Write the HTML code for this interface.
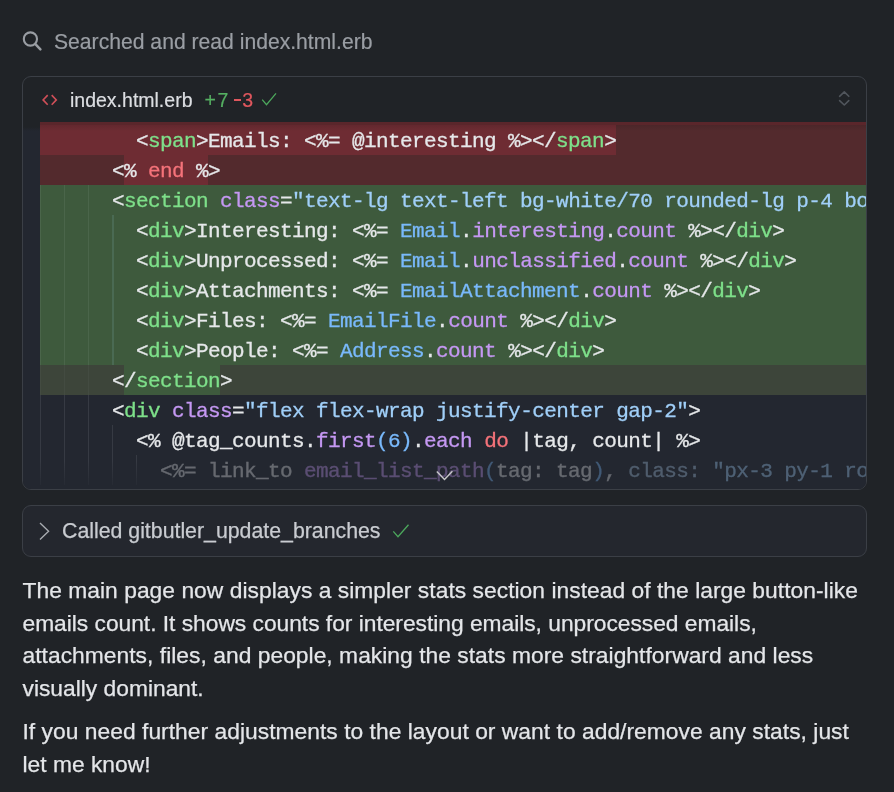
<!DOCTYPE html>
<html><head><meta charset="utf-8">
<style>
html,body{margin:0;padding:0;}
body{-webkit-font-smoothing:antialiased;will-change:transform;width:894px;height:792px;background:#202327;position:relative;overflow:hidden;font-family:"Liberation Sans",sans-serif;}
.abs{position:absolute;}
.search{left:54px;top:30.3px;font-size:21.15px;-webkit-text-stroke:0.2px currentColor;color:#9a9ea4;white-space:nowrap;line-height:24px;}
.card{left:22px;top:76px;width:843px;height:412px;border:1px solid #3b3f46;border-radius:9px;overflow:hidden;background:#202327;}
.hdr-name{left:47px;top:11px;font-size:19.5px;-webkit-text-stroke:0.2px currentColor;color:#dcdee2;white-space:nowrap;line-height:24px;}
.code{left:0;top:45px;width:843px;height:367px;background:#232730;overflow:hidden;}
.row{position:absolute;left:17px;width:826px;height:30px;}
.txt{position:absolute;left:0;top:1.8px;-webkit-text-stroke:0.3px currentColor;font-family:"Liberation Mono",monospace;font-size:21px;letter-spacing:-0.6px;line-height:30px;white-space:pre;color:#e6e8ea;}
.g{color:#7ee08a}.k{color:#f5737a}.p{color:#c598f3}.s{color:#a0cff8}.c{color:#79b9fb}
.guide{position:absolute;top:0;width:1px;height:30px;background:#363a43;}
.called{left:22px;top:505px;width:843px;height:50px;border:1px solid #3b3f46;border-radius:9px;background:#24272e;}
.called-t{left:39px;top:13px;-webkit-text-stroke:0.25px currentColor;font-size:21.3px;color:#c9ccd1;white-space:nowrap;line-height:24px;}
.body{left:22.5px;-webkit-text-stroke:0.25px currentColor;font-size:22.8px;color:#e4e6e9;white-space:nowrap;line-height:24px;}
</style></head><body>

<!-- search row -->
<svg class="abs" style="left:18px;top:26px" width="30" height="30" viewBox="0 0 30 30">
  <circle cx="12.4" cy="13.0" r="6.6" fill="none" stroke="#999da3" stroke-width="2.1"/>
  <line x1="17.4" y1="18.1" x2="22.4" y2="23.3" stroke="#999da3" stroke-width="2.5" stroke-linecap="round"/>
</svg>
<div class="abs search">Searched and read index.html.erb</div>

<div class="abs card">
  <svg class="abs" style="left:18px;top:16px" width="18" height="16" viewBox="0 0 18 16">
    <polyline points="6.7,2.1 2.1,6.9 6.7,11.7" fill="none" stroke="#cf4f58" stroke-width="1.6"/>
    <polyline points="10.7,2.1 15.3,6.9 10.7,11.7" fill="none" stroke="#cf4f58" stroke-width="1.6"/>
  </svg>
  <div class="abs hdr-name">index.html.erb</div>
  <div class="abs hdr-name" style="left:181.5px;color:#55b062;letter-spacing:1.6px">+7</div>
  <div class="abs" style="left:210.8px;top:22.3px;width:7.6px;height:1.9px;background:#e0575e"></div>
  <div class="abs hdr-name" style="left:219.2px;color:#e0575e">3</div>
  <svg class="abs" style="left:238px;top:15px" width="18" height="16" viewBox="0 0 18 16">
    <polyline points="1.2,7.6 5.5,12.7 15,1.4" fill="none" stroke="#4ca75c" stroke-width="1.3"/>
  </svg>
  <svg class="abs" style="left:813px;top:13px" width="16" height="20" viewBox="0 0 16 20">
    <polyline points="3.6,6.3 8.3,1.9 12.8,6.3" fill="none" stroke="#50555c" stroke-width="1.6" stroke-linecap="round" stroke-linejoin="round"/>
    <polyline points="3.6,10.6 8.3,15.0 12.8,10.6" fill="none" stroke="#50555c" stroke-width="1.6" stroke-linecap="round" stroke-linejoin="round"/>
  </svg>

  <div class="abs code">
    <!-- partial row -->
    <div class="row" style="top:0;height:3px;background:#5a262b"></div>
    <!-- row1 -->
    <div class="row" style="top:3px;background:#532a2d">
      <div class="abs" style="left:0;top:0;width:576px;height:30px;background:#6e2c33"></div>
      <div class="txt">        &lt;<span class="g">span</span>&gt;Emails: &lt;%= @interesting %&gt;&lt;/<span class="g">span</span>&gt;</div>
    </div>
    <!-- row2 -->
    <div class="row" style="top:33px;background:#532a2d">
      <div class="abs" style="left:84px;top:0;width:84px;height:30px;background:#6e2c33"></div>
      <div class="txt">      &lt;% <span class="k">end</span> %&gt;</div>
    </div>
    <!-- rows 3-8 -->
    <div class="row" style="top:63px;background:#3e5a3d">
      <div class="guide" style="left:0px;background:#4a654a"></div><div class="guide" style="left:24px;background:#4a654a"></div><div class="guide" style="left:48px;background:#4a654a"></div>
      <div class="txt">      &lt;<span class="g">section</span> <span class="p">class</span>=<span class="s">"text-lg text-left bg-white/70 rounded-lg p-4 border border-gray-200"</span>&gt;</div>
    </div>
    <div class="row" style="top:93px;background:#3e5a3d">
      <div class="guide" style="left:0px;background:#4a654a"></div><div class="guide" style="left:24px;background:#4a654a"></div><div class="guide" style="left:48px;background:#4a654a"></div><div class="guide" style="left:72px;width:2px;background:#4a6a53"></div>
      <div class="txt">        &lt;<span class="g">div</span>&gt;Interesting: &lt;%= <span class="c">Email</span>.<span class="p">interesting</span>.<span class="p">count</span> %&gt;&lt;/<span class="g">div</span>&gt;</div>
    </div>
    <div class="row" style="top:123px;background:#3e5a3d">
      <div class="guide" style="left:0px;background:#4a654a"></div><div class="guide" style="left:24px;background:#4a654a"></div><div class="guide" style="left:48px;background:#4a654a"></div><div class="guide" style="left:72px;width:2px;background:#4a6a53"></div>
      <div class="txt">        &lt;<span class="g">div</span>&gt;Unprocessed: &lt;%= <span class="c">Email</span>.<span class="p">unclassified</span>.<span class="p">count</span> %&gt;&lt;/<span class="g">div</span>&gt;</div>
    </div>
    <div class="row" style="top:153px;background:#3e5a3d">
      <div class="guide" style="left:0px;background:#4a654a"></div><div class="guide" style="left:24px;background:#4a654a"></div><div class="guide" style="left:48px;background:#4a654a"></div><div class="guide" style="left:72px;width:2px;background:#4a6a53"></div>
      <div class="txt">        &lt;<span class="g">div</span>&gt;Attachments: &lt;%= <span class="c">EmailAttachment</span>.<span class="p">count</span> %&gt;&lt;/<span class="g">div</span>&gt;</div>
    </div>
    <div class="row" style="top:183px;background:#3e5a3d">
      <div class="guide" style="left:0px;background:#4a654a"></div><div class="guide" style="left:24px;background:#4a654a"></div><div class="guide" style="left:48px;background:#4a654a"></div><div class="guide" style="left:72px;width:2px;background:#4a6a53"></div>
      <div class="txt">        &lt;<span class="g">div</span>&gt;Files: &lt;%= <span class="c">EmailFile</span>.<span class="p">count</span> %&gt;&lt;/<span class="g">div</span>&gt;</div>
    </div>
    <div class="row" style="top:213px;background:#3e5a3d">
      <div class="guide" style="left:0px;background:#4a654a"></div><div class="guide" style="left:24px;background:#4a654a"></div><div class="guide" style="left:48px;background:#4a654a"></div><div class="guide" style="left:72px;width:2px;background:#4a6a53"></div>
      <div class="txt">        &lt;<span class="g">div</span>&gt;People: &lt;%= <span class="c">Address</span>.<span class="p">count</span> %&gt;&lt;/<span class="g">div</span>&gt;</div>
    </div>
    <!-- row9 -->
    <div class="row" style="top:243px;background:#3d453a">
      <div class="abs" style="left:84px;top:0;width:96px;height:30px;background:#3e5a3d"></div>
      <div class="guide" style="left:0px;background:#434b41"></div><div class="guide" style="left:24px;background:#434b41"></div><div class="guide" style="left:48px;background:#434b41"></div>
      <div class="txt">      &lt;/<span class="g">section</span>&gt;</div>
    </div>
    <!-- row10 -->
    <div class="row" style="top:273px;">
      <div class="guide" style="left:0px"></div><div class="guide" style="left:24px"></div><div class="guide" style="left:48px"></div>
      <div class="txt">      &lt;<span class="g">div</span> <span class="p">class</span>=<span class="s">"flex flex-wrap justify-center gap-2"</span>&gt;</div>
    </div>
    <div class="row" style="top:303px;">
      <div class="guide" style="left:0px"></div><div class="guide" style="left:24px"></div><div class="guide" style="left:48px"></div><div class="guide" style="left:72px"></div>
      <div class="txt">        &lt;% @tag_counts.<span class="p">first</span><span class="c">(6)</span>.<span class="p">each</span> <span class="k">do</span> |tag, count| %&gt;</div>
    </div>
    <div class="row" style="top:333px;">
      <div class="guide" style="left:0px"></div><div class="guide" style="left:24px"></div><div class="guide" style="left:48px"></div><div class="guide" style="left:72px"></div><div class="guide" style="left:96px"></div>
      <div class="abs" style="left:0;top:6px;width:826px;height:28px;background:linear-gradient(rgba(35,39,48,0),rgba(35,39,48,0.95))"></div>
      <div class="txt" style="opacity:0.34">          &lt;%= link_to <span class="p">email_list_path</span><span class="c">(</span>tag: tag<span class="c">)</span>, <span style="color:#a3c2e0">class:</span> <span class="s">"px-3 py-1 rounded"</span></div>
    </div>
    <div class="abs" style="left:0;top:0;width:17px;height:9px;background:linear-gradient(#202327 0px,#202327 5px,rgba(32,35,39,0) 9px)"></div>
    <div class="abs" style="left:17px;top:3px;width:826px;height:6px;background:linear-gradient(rgba(20,10,12,0.12),rgba(20,10,12,0))"></div>
    <svg class="abs" style="left:411px;top:346px" width="20" height="14" viewBox="0 0 20 14">
      <polyline points="2.8,3.6 10.5,11.5 18.4,3.3" fill="none" stroke="#c8c9cb" stroke-width="1.4"/>
    </svg>
  </div>
</div>

<div class="abs called">
  <svg class="abs" style="left:14px;top:15px" width="14" height="20" viewBox="0 0 14 20">
    <polyline points="3,1.9 11.6,10.3 3,18.5" fill="none" stroke="#a9acb1" stroke-width="1.35"/>
  </svg>
  <div class="abs called-t">Called gitbutler_update_branches</div>
  <svg class="abs" style="left:369px;top:17px" width="18" height="16" viewBox="0 0 18 16">
    <polyline points="1.3,8.4 6.0,13.8 16.5,1.8" fill="none" stroke="#4ca75c" stroke-width="1.3"/>
  </svg>
</div>

<div class="abs body" style="top:578px;letter-spacing:0.035px">The main page now displays a simpler stats section instead of the large button-like</div>
<div class="abs body" style="top:611px;letter-spacing:-0.025px">emails count. It shows counts for interesting emails, unprocessed emails,</div>
<div class="abs body" style="top:643px;letter-spacing:0.033px">attachments, files, and people, making the stats more straightforward and less</div>
<div class="abs body" style="top:676px">visually dominant.</div>
<div class="abs body" style="top:719px;letter-spacing:0.033px">If you need further adjustments to the layout or want to add/remove any stats, just</div>
<div class="abs body" style="top:752px">let me know!</div>

</body></html>
